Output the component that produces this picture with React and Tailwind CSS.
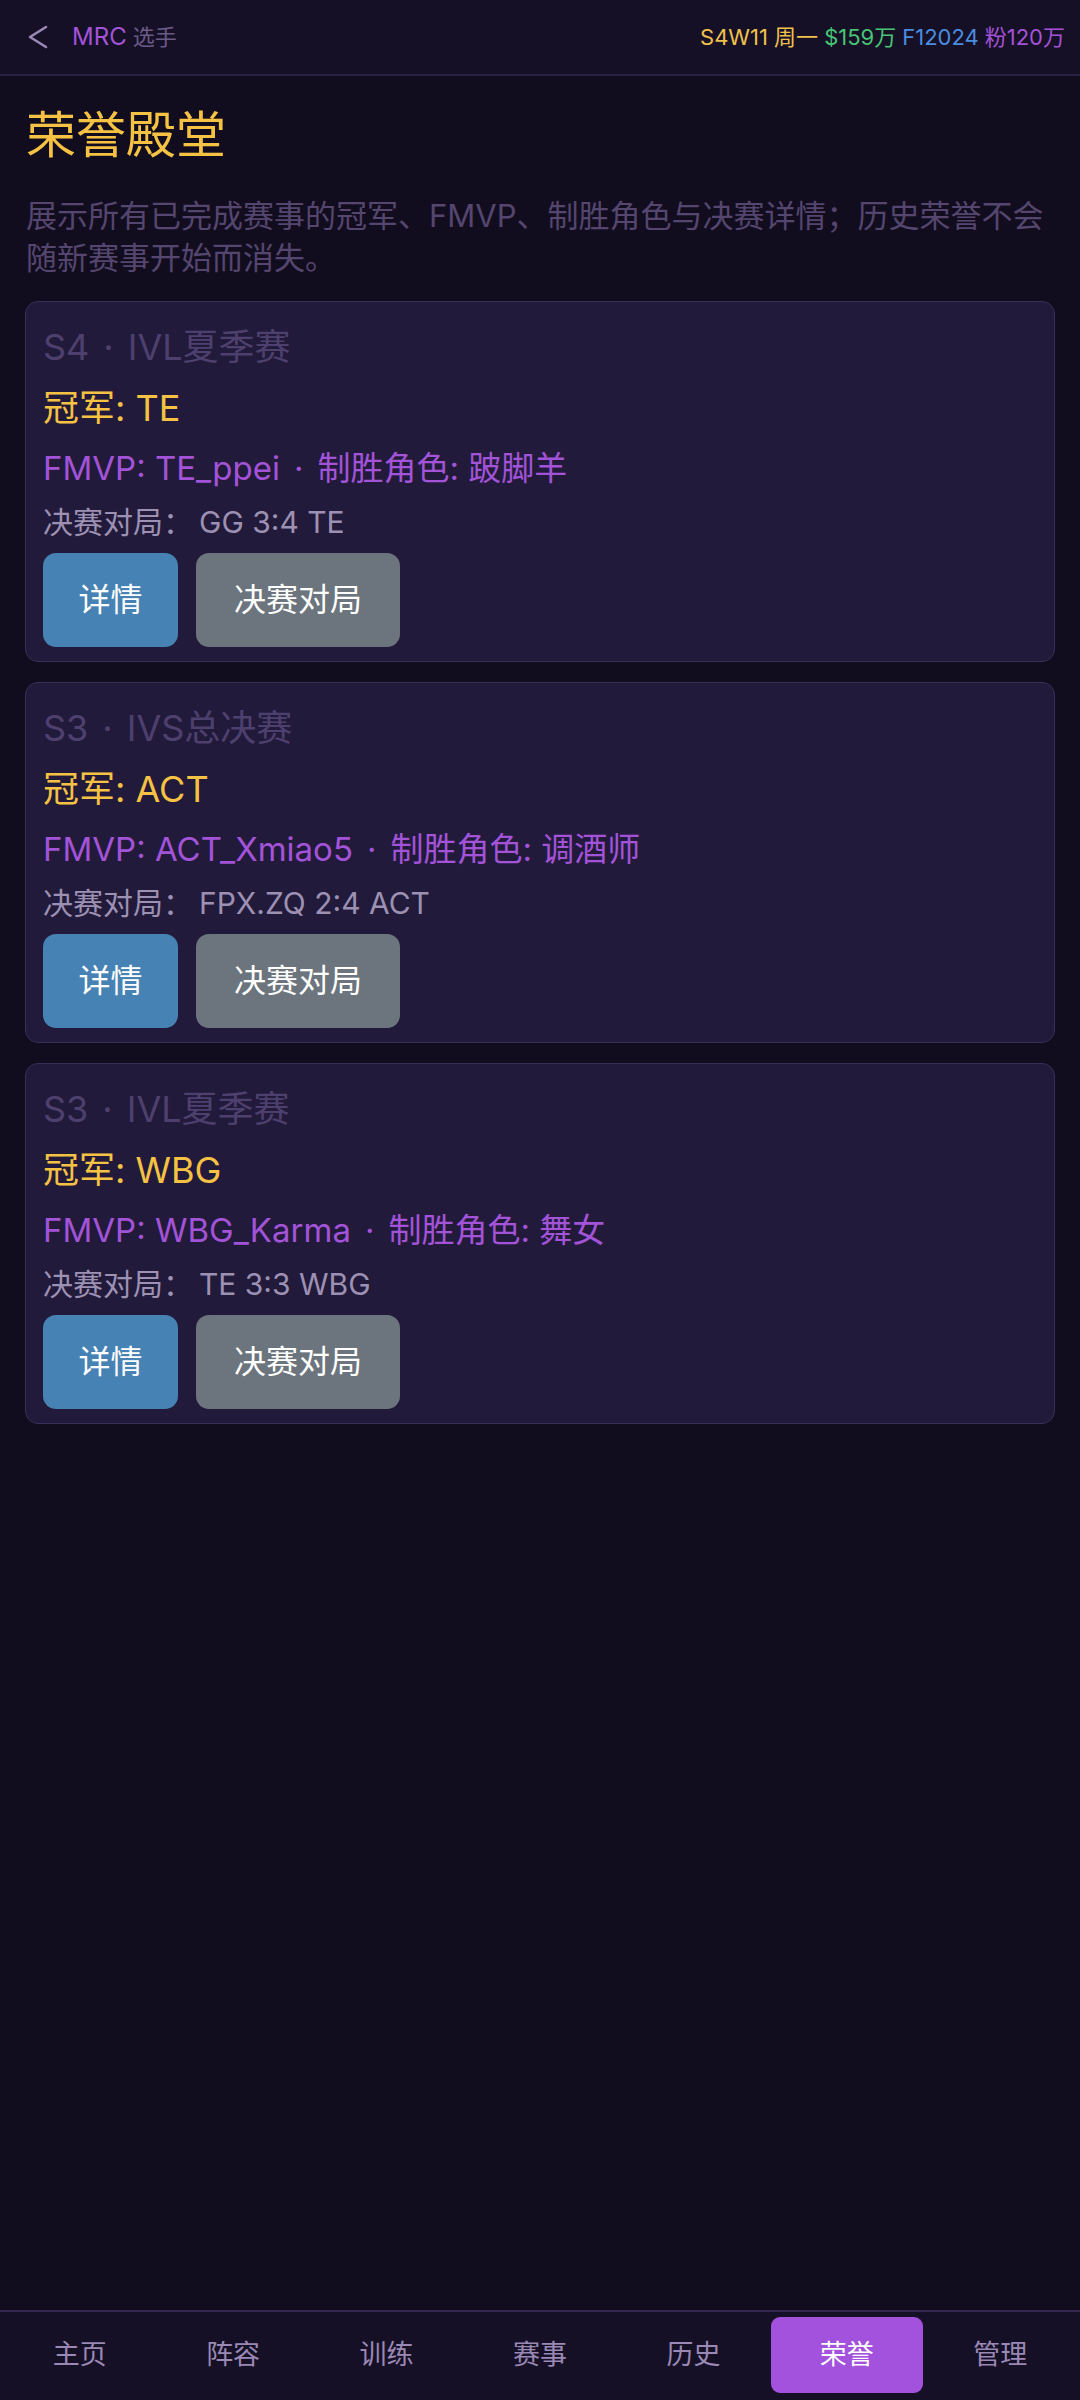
import React from 'react';

const honors = [
  {
    season: 'S4',
    name: 'IVL夏季赛',
    champion: 'TE',
    fmvp: 'TE_ppei',
    role: '跛脚羊',
    final: 'GG 3:4 TE',
  },
  {
    season: 'S3',
    name: 'IVS总决赛',
    champion: 'ACT',
    fmvp: 'ACT_Xmiao5',
    role: '调酒师',
    final: 'FPX.ZQ 2:4 ACT',
  },
  {
    season: 'S3',
    name: 'IVL夏季赛',
    champion: 'WBG',
    fmvp: 'WBG_Karma',
    role: '舞女',
    final: 'TE 3:3 WBG',
  },
];

const tabs = ['主页', '阵容', '训练', '赛事', '历史', '荣誉', '管理'];

const Dot = () => <span className="mx-[14px]">·</span>;

const HonorCard = ({ item }) => (
  <div className="rounded-[13px] border border-[#392e58] bg-[#221a3a] pl-[17px] pr-4 pt-[21px] pb-[14px]">
    <div className="text-[36px] leading-[48px] text-[#4d406e]">
      {item.season}
      <Dot />
      {item.name}
    </div>
    <div className="mt-[13px] text-[36px] leading-[48px] text-[#f5c244]">冠军: {item.champion}</div>
    <div className="mt-[14px] text-[33px] leading-[44px] text-[#a353d8]">
      FMVP: {item.fmvp}
      <Dot />
      制胜角色: {item.role}
    </div>
    <div className="mt-[12px] text-[30px] leading-[40px] text-[#9d91b3]">
      决赛对局：<span className="ml-[6px]">{item.final}</span>
    </div>
    <div className="mt-[11px] flex gap-[18px]">
      <button className="flex h-[94px] w-[135px] items-center justify-center rounded-[13px] bg-[#4682b4] text-[32px] text-white">
        详情
      </button>
      <button className="flex h-[94px] w-[204px] items-center justify-center rounded-[13px] bg-[#6c757d] text-[32px] text-white">
        决赛对局
      </button>
    </div>
  </div>
);

export default function App() {
  return (
    <div
      className="flex min-h-screen flex-col bg-[#120d1e]"
      style={{ fontFamily: 'Inter, "Noto Sans CJK SC", sans-serif' }}
    >
      {/* header */}
      <div className="flex h-[76px] items-center justify-between border-b-2 border-[#2c2245] bg-[#161026] pl-[27px] pr-[15px]">
        <div className="flex items-center">
          <svg width="22" height="24" viewBox="0 0 22 24" className="mr-[23px]">
            <polyline points="19,2 3,12 19,22" fill="none" stroke="#9a88b5" strokeWidth="2.6" strokeLinecap="round" strokeLinejoin="round" />
          </svg>
          <span className="text-[24px] text-[#a353d8]">MRC</span>
          <span className="ml-[6px] text-[22px] text-[#6a5a88]">选手</span>
        </div>
        <div className="flex items-center gap-[6px] text-[22px]">
          <span className="text-[#f0c04c]">S4W11 周一</span>
          <span className="text-[#47c474]">$159万</span>
          <span className="text-[#4a8de0]">F12024</span>
          <span className="text-[#a353d8]">粉120万</span>
        </div>
      </div>

      {/* content */}
      <div className="flex-1 px-[25px] pt-[24px]">
        <h1 className="pl-[1px] text-[50px] leading-[70px] text-[#f5c244]">荣誉殿堂</h1>
        <p className="mt-[25px] pl-[1px] text-[31px] leading-[42px] text-[#54466f]">
          展示所有已完成赛事的冠军、FMVP、制胜角色与决赛详情；历史荣誉不会随新赛事开始而消失。
        </p>
        <div className="mt-[22px] flex flex-col gap-[20px]">
          {honors.map((item, i) => (
            <HonorCard key={i} item={item} />
          ))}
        </div>
      </div>

      {/* bottom nav */}
      <div className="grid grid-cols-7 border-t-2 border-[#35294f] bg-[#161026] px-[3px] pt-[5px] pb-[7px]">
        {tabs.map((t) => (
          <div
            key={t}
            className={
              t === '荣誉'
                ? 'mx-[1px] flex h-[76px] items-center justify-center rounded-[9px] bg-[#a252dc] text-[27px] text-white'
                : 'mx-[1px] flex h-[76px] items-center justify-center text-[27px] text-[#9a88b5]'
            }
          >
            {t}
          </div>
        ))}
      </div>
    </div>
  );
}
